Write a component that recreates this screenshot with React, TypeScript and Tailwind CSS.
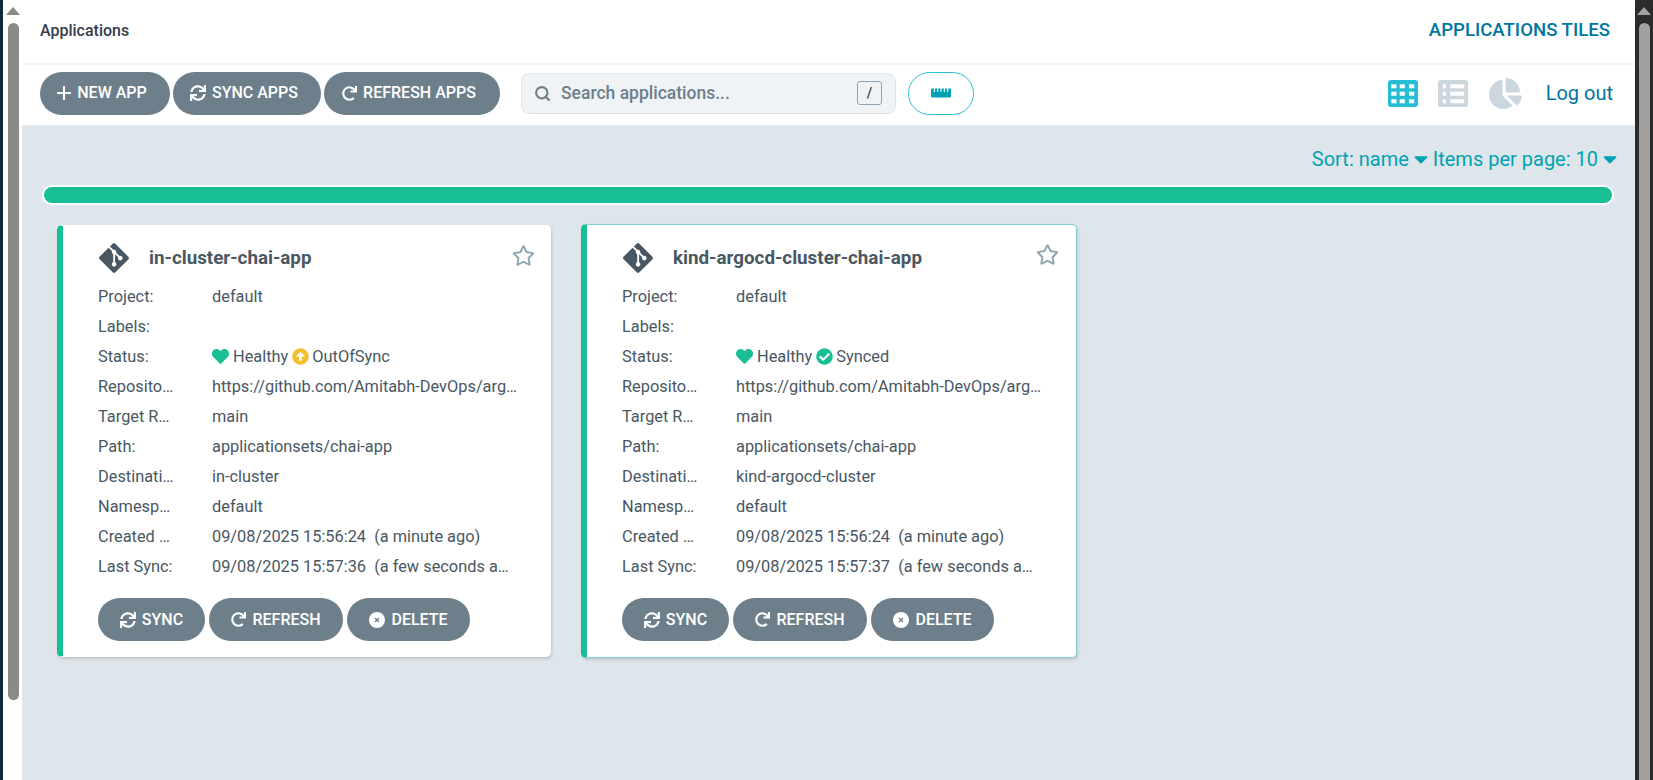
import React from 'react';
import {
  FaArrowAltCircleUp,
  FaCaretDown,
  FaChartPie,
  FaCheckCircle,
  FaGitAlt,
  FaHeart,
  FaRedo,
  FaRegStar,
  FaRulerHorizontal,
  FaSync,
} from 'react-icons/fa';
import { Search } from 'lucide-react';

type AppCard = {
  name: string;
  syncStatus: 'OutOfSync' | 'Synced';
  destination: string;
  lastSync: string;
  active?: boolean;
};

const apps: AppCard[] = [
  { name: 'in-cluster-chai-app', syncStatus: 'OutOfSync', destination: 'in-cluster', lastSync: '09/08/2025 15:57:36' },
  { name: 'kind-argocd-cluster-chai-app', syncStatus: 'Synced', destination: 'kind-argocd-cluster', lastSync: '09/08/2025 15:57:37', active: true },
];

const iconRows = [4.3, 11.7, 19.3];

const TilesIcon = () => (
  <svg viewBox="0 0 30 27" className="h-[27px] w-[30px]">
    <rect width="30" height="27" rx="3" fill="#25bdd4" />
    {iconRows.map((y) =>
      [3.3, 11.7, 21].map((x) => <rect key={`${x}-${y}`} x={x} y={y} width="5.2" height="4" fill="#fff" />),
    )}
  </svg>
);

const ListIcon = () => (
  <svg viewBox="0 0 30 27" className="h-[27px] w-[30px]">
    <rect width="30" height="27" rx="3" fill="#ccd6dd" />
    {iconRows.map((y) => (
      <React.Fragment key={y}>
        <rect x="4.7" y={y} width="3.3" height="4" fill="#fff" />
        <rect x="12.3" y={y} width="14" height="4" fill="#fff" />
      </React.Fragment>
    ))}
  </svg>
);

const PlusIcon = () => (
  <svg viewBox="0 0 14 14" className="h-[14px] w-[14px]">
    <path d="M7 0v14M0 7h14" stroke="#fff" strokeWidth="2" />
  </svg>
);

const DeleteIcon = () => (
  <svg viewBox="0 0 16 16" className="h-[16px] w-[16px]">
    <circle cx="8" cy="8" r="8" fill="#fff" />
    <path d="M6 6l4 4M10 6l-4 4" stroke="#6d7f8b" strokeWidth="1.3" />
  </svg>
);

const PillButton: React.FC<{ icon: React.ReactNode; label: string; className: string }> = ({ icon, label, className }) => (
  <button className={`flex h-[43px] items-center justify-center gap-[6px] rounded-full bg-[#6d7f8b] text-[16px] font-medium text-white ${className}`}>
    {icon}
    {label}
  </button>
);

const Row: React.FC<{ label: string; narrow?: boolean; children?: React.ReactNode }> = ({ label, narrow, children }) => (
  <div className="flex h-[30px] items-center text-[16.35px] text-[#495763]">
    <div className="w-[76px] shrink-0 truncate">{label}</div>
    <div className={`ml-[38px] truncate whitespace-pre ${narrow ? 'w-[302px]' : 'w-[306px]'}`}>{children}</div>
  </div>
);

const Card: React.FC<{ app: AppCard; className: string }> = ({ app, className }) => (
  <div
    className={`relative rounded-[5px] border border-l-[6px] border-l-[#18be94] bg-white pl-[35px] shadow-[1px_2px_3px_rgba(0,0,0,0.14)] ${
      app.active ? '-mt-[1px] h-[434px] border-y-[#7fd0d8] border-r-[#7fd0d8] pt-[17px]' : 'h-[432px] border-y-white border-r-white pt-[16px]'
    } ${className}`}
  >
    <FaRegStar className={`absolute top-[19px] h-[21px] w-[23px] text-[#8fa4b1] ${app.active ? 'right-[17px]' : 'right-[15px]'}`} />
    <div className="flex h-[32px] items-center">
      <FaGitAlt className="-ml-[1px] h-[34px] w-[34px] text-[#495763]" />
      <span className="ml-[18px] text-[18.8px] font-bold text-[#495763]">{app.name}</span>
    </div>
    <div className="mt-[8px]">
      <Row label="Project:">default</Row>
      <Row label="Labels:" />
      <Row label="Status:">
        <span className="flex items-center">
          <FaHeart className="h-[17px] w-[17px] text-[#18be94]" />
          <span className="ml-[4px]">Healthy</span>
          {app.syncStatus === 'Synced' ? (
            <FaCheckCircle className="ml-[4px] h-[17px] w-[17px] text-[#18be94]" />
          ) : (
            <FaArrowAltCircleUp className="ml-[4px] h-[17px] w-[17px] text-[#f4c030]" />
          )}
          <span className="ml-[3px]">{app.syncStatus}</span>
        </span>
      </Row>
      <Row label="Repository:">https://github.com/Amitabh-DevOps/argocd-applicationsets</Row>
      <Row label="Target Revision:">main</Row>
      <Row label="Path:">applicationsets/chai-app</Row>
      <Row label="Destination:">{app.destination}</Row>
      <Row label="Namespace:">default</Row>
      <Row label="Created At:">09/08/2025 15:56:24  (a minute ago)</Row>
      <Row label="Last Sync:" narrow>{app.lastSync}  (a few seconds ago)</Row>
    </div>
    <div className="mt-[16px] flex gap-[4px]">
      <PillButton icon={<FaSync className="h-[16px] w-[16px]" />} label="SYNC" className="w-[107px]" />
      <PillButton icon={<FaRedo className="h-[15px] w-[15px]" />} label="REFRESH" className="w-[134px]" />
      <PillButton icon={<DeleteIcon />} label="DELETE" className="w-[123px]" />
    </div>
  </div>
);

const App: React.FC = () => {
  return (
    <div className="flex h-[780px] w-[1653px] overflow-hidden bg-white font-['Roboto',sans-serif]">
      {/* left edge and scrollbar */}
      <div className="w-[3px] shrink-0 bg-[#0f2b3d]" />
      <div className="flex w-[19px] shrink-0 flex-col items-center bg-white pl-[1px]">
        <div className="mt-[7px] h-0 w-0 border-x-[7px] border-b-[8px] border-x-transparent border-b-[#8a8a8a]" />
        <div className="mt-[8px] h-[677px] w-[11px] rounded-full bg-[#8a8a8a]" />
      </div>

      <div className="flex min-w-0 flex-1 flex-col">
        <header className="flex h-[65px] shrink-0 items-center justify-between border-b-2 border-[#eff3f5] pb-[2px] pl-[18px] pr-[25px]">
          <span className="text-[16px] font-medium text-[#363c4a]">Applications</span>
          <span className="text-[18.6px] font-medium text-[#00769f]">APPLICATIONS TILES</span>
        </header>

        <div className="flex h-[61px] shrink-0 items-center border-b border-[#e4eaee] pb-[4px] pl-[18px] pr-[22px]">
          <div className="flex gap-[3px]">
            <PillButton icon={<PlusIcon />} label="NEW APP" className="w-[130px] pr-[6px]" />
            <PillButton icon={<FaSync className="h-[16px] w-[16px]" />} label="SYNC APPS" className="w-[148px] pr-[6px]" />
            <PillButton icon={<FaRedo className="h-[15px] w-[15px]" />} label="REFRESH APPS" className="w-[176px] pr-[6px]" />
          </div>
          <div className="ml-[21px] flex h-[41px] w-[375px] items-center rounded-[8px] border border-[#dee6eb] bg-[#eff3f5] pl-[12px] pr-[13px]">
            <Search className="h-[17px] w-[17px] text-[#6d7f8b]" strokeWidth={3} />
            <span className="ml-[10px] flex-1 text-[17.5px] font-medium text-[#6d7f8b]">Search applications...</span>
            <span className="flex h-[24px] w-[25px] items-center justify-center rounded-[3px] border border-[#8fa4b1] text-[14px] font-medium text-[#363c4a]">/</span>
          </div>
          <button className="ml-[12px] flex h-[43px] w-[66px] items-center justify-center rounded-full border border-[#2bbdd2]">
            <FaRulerHorizontal className="h-[20px] w-[20px] text-[#00a2b3]" />
          </button>
          <div className="ml-auto flex items-center">
            <TilesIcon />
            <div className="ml-[20px]">
              <ListIcon />
            </div>
            <FaChartPie className="ml-[21px] h-[33px] w-[33px] text-[#ccd6dd]" />
            <span className="ml-[24px] text-[20px] text-[#00769f]">Log out</span>
          </div>
        </div>

        <main className="flex-1 bg-[#dee6eb] pl-[20px] pr-[21px]">
          <div className="-mr-[3px] flex h-[59px] items-center justify-end gap-[5px] pt-[7px] text-[20px] text-[#00a2b3]">
            <span className="flex items-center gap-[5px]">
              Sort: name <FaCaretDown className="h-[22px] w-[14px]" />
            </span>
            <span className="flex items-center gap-[5px]">
              Items per page: 10 <FaCaretDown className="h-[22px] w-[14px]" />
            </span>
          </div>
          <div className="h-[20px] rounded-full border-2 border-white bg-[#18be94]" />
          <div className="mt-[20px] flex items-start pl-[15px]">
            {apps.map((app, i) => (
              <Card key={app.name} app={app} className={i === 0 ? 'w-[494px]' : 'ml-[30px] w-[496px]'} />
            ))}
          </div>
        </main>
      </div>

      {/* right scrollbar */}
      <div className="flex w-[18px] shrink-0 flex-col items-center bg-[#2b2b2b]">
        <div className="mt-[7px] h-0 w-0 border-x-[7px] border-b-[8px] border-x-transparent border-b-[#a0a0a0]" />
        <div className="mt-[8px] w-[11px] flex-1 rounded-t-full bg-[#a0a0a0]" />
      </div>
    </div>
  );
};

export default App;
